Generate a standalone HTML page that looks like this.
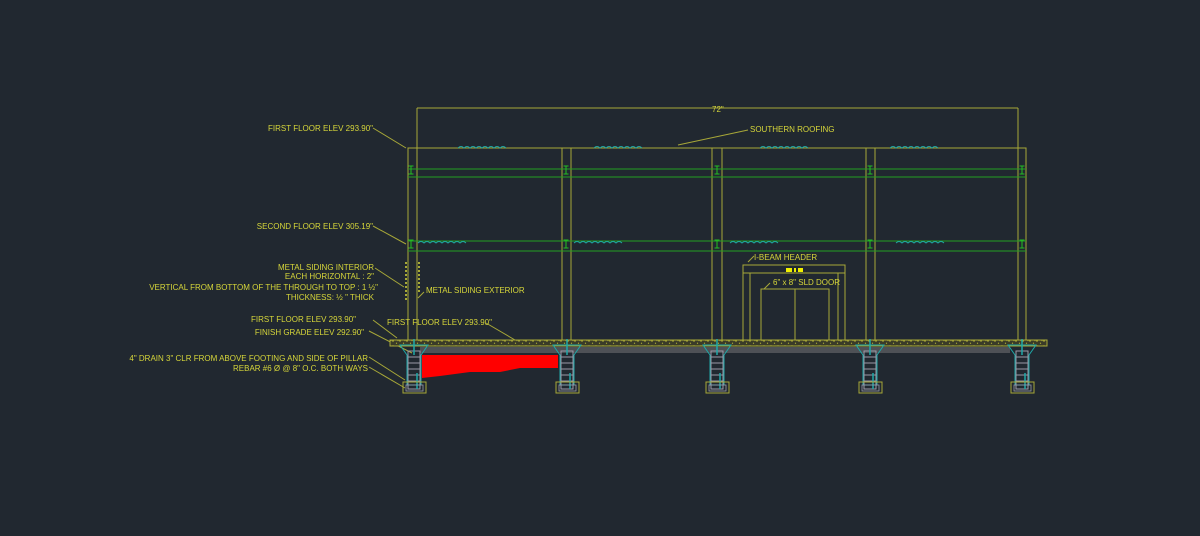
<!DOCTYPE html>
<html><head><meta charset="utf-8"><style>
html,body{margin:0;padding:0;background:#212830;width:1200px;height:536px;overflow:hidden}
svg{display:block}
text{font-family:"Liberation Sans",sans-serif;font-size:8px;fill:#d6d63a}
</style></head><body>
<svg width="1200" height="536" viewBox="0 0 1200 536" xmlns="http://www.w3.org/2000/svg">
<defs>
<pattern id="grav" width="7" height="5" patternUnits="userSpaceOnUse">
  <rect width="7" height="5" fill="#3a3b28"/>
  <circle cx="1" cy="1" r="0.7" fill="#d6d63a"/><circle cx="4.5" cy="3.2" r="0.6" fill="#b8b838"/><circle cx="6" cy="0.8" r="0.4" fill="#e0e040"/>
</pattern>
<g id="pil">
  <path d="M-14 0 L14 0 L7 10 L7 40 L-7 40 L-7 10 Z" fill="none" stroke="#1fa8a8" stroke-width="1"/>
  <rect x="-6" y="6" width="12" height="38" fill="none" stroke="#9a9aa8" stroke-width="1"/>
  <path d="M-6 12H6M-6 18H6M-6 24H6M-6 30H6M-6 36H6" stroke="#9a9aa8" stroke-width="1"/>
  <path d="M0 -6V10M3 28V44" stroke="#1fa8a8" stroke-width="1.5"/>
  <rect x="-11" y="37" width="23" height="11" fill="none" stroke="#a8a838" stroke-width="1"/>
  <rect x="-8" y="40" width="17" height="6" fill="none" stroke="#9a9aa8" stroke-width="0.8"/>
</g>
<g id="wave"><path d="M0 0 q3 -3 6 0 q3 -3 6 0 q3 -3 6 0 q3 -3 6 0 q3 -3 6 0 q3 -3 6 0 q3 -3 6 0 q3 -3 6 0" fill="none" stroke="#1fa8a8" stroke-width="0.9"/></g>
<g id="ib"><path d="M-2.5 0H2.5M0 0V8M-2.5 8H2.5" stroke="#22c022" stroke-width="1"/></g>
</defs>
<g stroke="#a8a838" stroke-width="1" fill="none">
  <path d="M417 108H1018M417 108V338M1018 108V148"/>
  <rect x="408" y="148" width="618" height="192"/>
  <path d="M417 148V340M562 148V340M571 148V340M712 148V340M722 148V340M866 148V340M875 148V340M1018 148V340"/>
  <path d="M678 145L748 130"/>
  <path d="M373 128L406 148M373 226L406 244M375 268L404 287M424 292L418 298M373 320L397 338M369 331L412 353M369 357L405 380M369 367L405 388M486 323L515 340"/>
  <rect x="743" y="265" width="102" height="8"/>
  <path d="M743 273V340M845 273V340M750 273V340M838 273V340"/>
  <rect x="761" y="289" width="68" height="51"/>
  <path d="M795 289V340M770 283L764 289M748 262L754 256"/>
</g>
<rect x="390" y="340" width="657" height="6" fill="url(#grav)" stroke="#a8a838" stroke-width="1"/>
<rect x="420" y="347" width="590" height="6" fill="#4e5156"/>
<g stroke="#22a022" stroke-width="1">
  <path d="M408 169H1026M408 177H1026M408 241H1026M408 251H1026"/>
</g>
<g fill="none">
<use href="#ib" x="411" y="166"/><use href="#ib" x="566" y="166"/><use href="#ib" x="717" y="166"/><use href="#ib" x="870" y="166"/><use href="#ib" x="1022" y="166"/>
<use href="#ib" x="411" y="240"/><use href="#ib" x="566" y="240"/><use href="#ib" x="717" y="240"/><use href="#ib" x="870" y="240"/><use href="#ib" x="1022" y="240"/>
<use href="#wave" x="458" y="148"/><use href="#wave" x="594" y="148"/><use href="#wave" x="760" y="148"/><use href="#wave" x="890" y="148"/>
<use href="#wave" x="418" y="243"/><use href="#wave" x="574" y="243"/><use href="#wave" x="730" y="243"/><use href="#wave" x="896" y="243"/>
</g>
<path d="M406 262 v40 M419 262 v30" stroke="#d6d63a" stroke-width="1.5" stroke-dasharray="2 2"/>
<rect x="786" y="268" width="6" height="4" fill="#f0f000"/><rect x="794" y="268" width="2" height="4" fill="#f0f000"/><rect x="798" y="268" width="5" height="4" fill="#f0f000"/>
<path d="M422 355H558V368H520L500 372L470 372L440 376L422 378Z" fill="#ff0000"/>
<use href="#pil" x="414" y="345"/><use href="#pil" x="567" y="345"/><use href="#pil" x="717" y="345"/><use href="#pil" x="870" y="345"/><use href="#pil" x="1022" y="345"/>
<text x="712" y="112">72"</text>
<text x="750" y="132">SOUTHERN ROOFING</text>
<text x="373" y="131" text-anchor="end">FIRST FLOOR ELEV 293.90"</text>
<text x="373" y="229" text-anchor="end">SECOND FLOOR ELEV  305.19"</text>
<text x="374" y="270" text-anchor="end">METAL SIDING INTERIOR</text>
<text x="374" y="279" text-anchor="end">EACH HORIZONTAL :  2"</text>
<text x="378" y="290" text-anchor="end">VERTICAL FROM BOTTOM OF THE THROUGH TO TOP : 1 ½"</text>
<text x="374" y="300" text-anchor="end">THICKNESS: ½ " THICK</text>
<text x="426" y="293">METAL SIDING EXTERIOR</text>
<text x="356" y="322" text-anchor="end">FIRST FLOOR ELEV 293.90"</text>
<text x="364" y="335" text-anchor="end">FINISH GRADE ELEV 292.90"</text>
<text x="387" y="325">FIRST FLOOR ELEV 293.90"</text>
<text x="368" y="361" text-anchor="end">4" DRAIN 3" CLR FROM ABOVE FOOTING AND SIDE OF PILLAR</text>
<text x="368" y="371" text-anchor="end">REBAR #6 Ø @ 8" O.C. BOTH WAYS</text>
<text x="754" y="260">I-BEAM HEADER</text>
<text x="773" y="285">6" x 8" SLD DOOR</text>
</svg>
</body></html>
